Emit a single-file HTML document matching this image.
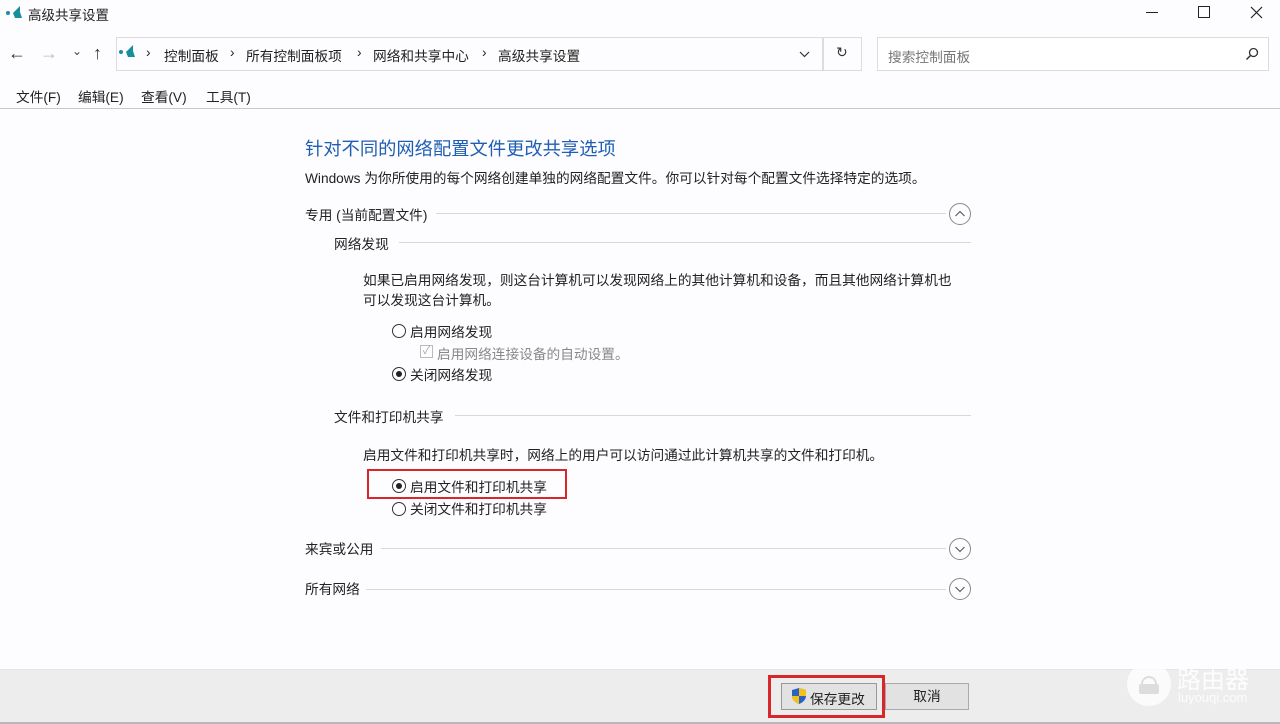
<!DOCTYPE html>
<html><head><meta charset="utf-8"><style>
*{margin:0;padding:0;box-sizing:border-box}
body{width:1280px;height:724px;background:#fdfcfe;font-family:"Liberation Sans","Noto Sans CJK SC",sans-serif;font-size:13.7px;color:#222;position:relative;overflow:hidden}
.a{position:absolute;white-space:nowrap}
.line{position:absolute;height:1px;background:#d8d8d8}
.circ{position:absolute;width:22px;height:22px}
.radio{position:absolute;width:14px;height:14px;border:1px solid #333;border-radius:50%;background:#fff}
.radio.on::after{content:"";position:absolute;left:3px;top:3px;width:6px;height:6px;border-radius:50%;background:#222}
</style></head><body>
<!-- title bar -->
<svg class="a" style="left:5px;top:4px" width="18" height="16"><circle cx="3" cy="9" r="2" fill="#1c8aa8"/><path d="M8 9 L15 2 L15 8 L17 14 L10 14 Z" fill="#178f9c"/></svg>
<div class="a" style="left:28px;top:4px;font-size:13.5px">高级共享设置</div>
<div class="a" style="left:1146px;top:12px;width:12px;height:1px;background:#222"></div>
<div class="a" style="left:1198px;top:6px;width:12px;height:12px;border:1px solid #222"></div>
<svg class="a" style="left:1250px;top:6px" width="13" height="13"><path d="M1 1L12 12M12 1L1 12" stroke="#222" stroke-width="1.2"/></svg>
<!-- nav -->
<div class="a" style="left:8px;top:43px;font-size:18px;color:#333">←</div>
<div class="a" style="left:40px;top:43px;font-size:18px;color:#bbb">→</div>
<div class="a" style="left:72px;top:44px;font-size:12px;color:#444">⌄</div>
<div class="a" style="left:93px;top:43px;font-size:18px;color:#333">↑</div>
<div class="a" style="left:116px;top:37px;width:707px;height:34px;border:1px solid #dcdcdc"></div>
<div class="a" style="left:823px;top:37px;width:39px;height:34px;border:1px solid #dcdcdc"></div>
<svg class="a" style="left:118px;top:44px" width="20" height="16"><circle cx="3" cy="8" r="2" fill="#1c8aa8"/><path d="M8 8 L15 1 L15 7 L17 13 L10 13 Z" fill="#178f9c"/></svg>
<div class="a" style="left:146px;top:45px">›</div><div class="a" style="left:164px;top:45px">控制面板</div>
<div class="a" style="left:230px;top:45px">›</div><div class="a" style="left:246px;top:45px">所有控制面板项</div>
<div class="a" style="left:357px;top:45px">›</div><div class="a" style="left:373px;top:45px">网络和共享中心</div>
<div class="a" style="left:482px;top:45px">›</div><div class="a" style="left:498px;top:45px">高级共享设置</div>
<svg class="a" style="left:799px;top:51px" width="11" height="7"><path d="M1 1L5.5 5.5L10 1" stroke="#333" fill="none" stroke-width="1.2"/></svg>
<div class="a" style="left:836px;top:44px;font-size:14px;color:#333">↻</div>
<div class="a" style="left:877px;top:37px;width:392px;height:34px;border:1px solid #dcdcdc;background:#fff"></div>
<div class="a" style="left:888px;top:46px;color:#777">搜索控制面板</div>
<svg class="a" style="left:1245px;top:47px" width="14" height="14"><circle cx="8.5" cy="5.5" r="4" fill="none" stroke="#333" stroke-width="1.3"/><path d="M5.5 8.5 L1.5 12.5" stroke="#333" stroke-width="1.5"/></svg>
<!-- menu -->
<div class="a" style="left:16px;top:86px">文件(F)</div>
<div class="a" style="left:78px;top:86px">编辑(E)</div>
<div class="a" style="left:141px;top:86px">查看(V)</div>
<div class="a" style="left:206px;top:86px">工具(T)</div>
<div class="a" style="left:0;top:108px;width:1280px;height:1px;background:#c8c8c8"></div>
<!-- content -->
<div class="a" style="left:305px;top:135px;font-size:18.3px;color:#1f5fb3">针对不同的网络配置文件更改共享选项</div>
<div class="a" style="left:305px;top:167px">Windows 为你所使用的每个网络创建单独的网络配置文件。你可以针对每个配置文件选择特定的选项。</div>
<div class="a" style="left:305px;top:204px">专用 (当前配置文件)</div>
<div class="line" style="left:436px;top:213px;width:510px"></div>
<svg class="circ" style="left:949px;top:203px" width="22" height="22"><circle cx="11" cy="11" r="10.5" fill="none" stroke="#888"/><path d="M6.5 13L11 8.5L15.5 13" fill="none" stroke="#555" stroke-width="1.1"/></svg>
<div class="a" style="left:334px;top:233px">网络发现</div>
<div class="line" style="left:399px;top:242px;width:572px"></div>
<div class="a" style="left:363px;top:269px">如果已启用网络发现，则这台计算机可以发现网络上的其他计算机和设备，而且其他网络计算机也</div>
<div class="a" style="left:363px;top:289px">可以发现这台计算机。</div>
<div class="radio" style="left:392px;top:324px"></div><div class="a" style="left:410px;top:321px">启用网络发现</div>
<div class="a" style="left:420px;top:345px;width:13px;height:13px;border:1px solid #bbb;font-size:11px;color:#aaa;line-height:11px;text-align:center">✓</div>
<div class="a" style="left:437px;top:343px;color:#888">启用网络连接设备的自动设置。</div>
<div class="radio on" style="left:392px;top:367px"></div><div class="a" style="left:410px;top:364px">关闭网络发现</div>
<div class="a" style="left:334px;top:406px">文件和打印机共享</div>
<div class="line" style="left:455px;top:415px;width:516px"></div>
<div class="a" style="left:363px;top:444px">启用文件和打印机共享时，网络上的用户可以访问通过此计算机共享的文件和打印机。</div>
<div class="a" style="left:367px;top:469px;width:200px;height:30px;border:2px solid #d8262a"></div>
<div class="radio on" style="left:392px;top:479px"></div><div class="a" style="left:410px;top:476px">启用文件和打印机共享</div>
<div class="radio" style="left:392px;top:502px"></div><div class="a" style="left:410px;top:498px">关闭文件和打印机共享</div>
<div class="a" style="left:305px;top:538px">来宾或公用</div>
<div class="line" style="left:381px;top:548px;width:565px"></div>
<svg class="circ" style="left:949px;top:538px" width="22" height="22"><circle cx="11" cy="11" r="10.5" fill="none" stroke="#888"/><path d="M6.5 9L11 13.5L15.5 9" fill="none" stroke="#555" stroke-width="1.1"/></svg>
<div class="a" style="left:305px;top:578px">所有网络</div>
<div class="line" style="left:366px;top:589px;width:580px"></div>
<svg class="circ" style="left:949px;top:578px" width="22" height="22"><circle cx="11" cy="11" r="10.5" fill="none" stroke="#888"/><path d="M6.5 9L11 13.5L15.5 9" fill="none" stroke="#555" stroke-width="1.1"/></svg>
<!-- bottom -->
<div class="a" style="left:0;top:669px;width:1280px;height:53px;background:#eeedee;border-top:1px solid #e4e4e4"></div>
<div class="a" style="left:0;top:722px;width:1280px;height:2px;background:#b8b8b8"></div>
<div class="a" style="left:768px;top:675px;width:117px;height:43px;border:3px solid #d8262a"></div>
<div class="a" style="left:781px;top:683px;width:96px;height:27px;border:1px solid #999;background:#e2e2e2"></div>
<svg class="a" style="left:791px;top:687px" width="16" height="18"><path d="M8 1 L15 3 L15 9 C15 13 11 16 8 17 C5 16 1 13 1 9 L1 3 Z" fill="#2a62c4"/><path d="M8 1 L15 3 L15 9 L8 9 Z M1 9 L8 9 L8 17 C5 16 1 13 1 9Z" fill="#f3c21a"/></svg>
<div class="a" style="left:810px;top:688px">保存更改</div>
<div class="a" style="left:885px;top:683px;width:84px;height:27px;border:1px solid #aaa;background:#e2e2e2;text-align:center;line-height:25px">取消</div>
<!-- watermark -->
<div class="a" style="left:1127px;top:662px;width:44px;height:44px;border-radius:50%;background:rgba(255,255,255,.75)"></div>
<svg class="a" style="left:1135px;top:672px" width="28" height="24"><path d="M7 12 A7 7 0 0 1 21 12" fill="none" stroke="#ddd" stroke-width="2"/><rect x="4" y="12" width="20" height="10" rx="2" fill="#ddd"/></svg>
<div class="a" style="left:1177px;top:660px;font-size:24px;color:rgba(255,255,255,.85)">路由器</div>
<div class="a" style="left:1178px;top:690px;font-size:13px;color:rgba(255,255,255,.85)">luyouqi.com</div>
</body></html>
